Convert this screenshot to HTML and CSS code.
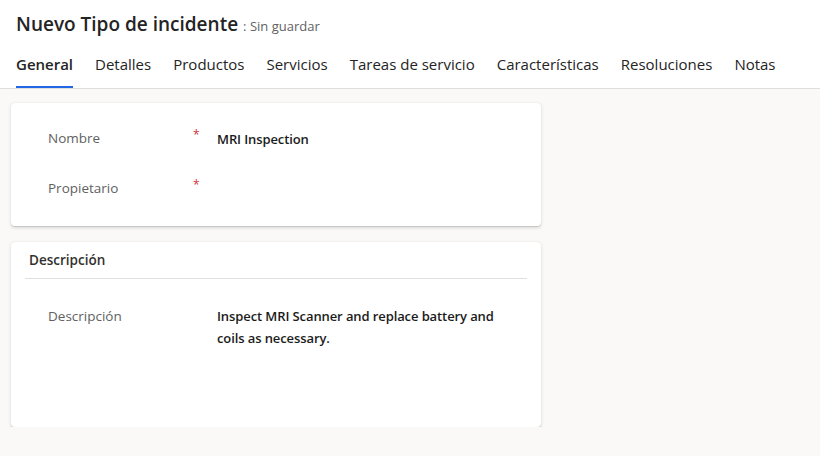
FILE: index.html
```html
<!DOCTYPE html>
<html lang="es">
<head>
    <meta charset="UTF-8">
    <meta name="viewport" content="width=device-width, initial-scale=1.0">
    <title>Nuevo Tipo de incidente</title>
    <link rel="stylesheet" href="styles.css">
</head>
<body>
    <div class="header">
        <div class="title-row">
            <h1 class="title">Nuevo Tipo de incidente</h1>
            <span class="save-state">: Sin guardar</span>
        </div>
        <ul class="tabs">
            <li class="tab active">General</li>
            <li class="tab">Detalles</li>
            <li class="tab">Productos</li>
            <li class="tab">Servicios</li>
            <li class="tab">Tareas de servicio</li>
            <li class="tab">Características</li>
            <li class="tab">Resoluciones</li>
            <li class="tab">Notas</li>
        </ul>
    </div>

    <div class="content">
        <div class="card card-main">
            <div class="field">
                <div class="field-label">Nombre</div>
                <div class="field-req">*</div>
                <div class="field-value strong">MRI Inspection</div>
            </div>
            <div class="field">
                <div class="field-label">Propietario</div>
                <div class="field-req">*</div>
                <div class="field-value"></div>
            </div>
        </div>

        <div class="card card-desc">
            <div class="section-title">Descripción</div>
            <div class="field field-text">
                <div class="field-label">Descripción</div>
                <div class="field-req"></div>
                <div class="field-value desc-value">Inspect MRI Scanner and replace battery and coils as necessary.</div>
            </div>
        </div>
    </div>
</body>
</html>
```

FILE: styles.css
```css
body {
    margin: 0;
    font-family: "Segoe UI", "Open Sans", sans-serif;
    background: #faf9f8;
    color: #242424;
}
.header {
    background: #fff;
    border-bottom: 1px solid #e1dfdd;
    padding: 0 16px;
}
.title-row {
    height: 48px;
    display: flex;
    align-items: center;
    gap: 5px;
}
.title {
    margin: 0;
    font-size: 19px;
    font-weight: 600;
    color: #242424;
}
.save-state {
    font-size: 13px;
    color: #616161;
    padding-top: 3px;
}
.tabs {
    list-style: none;
    margin: 0;
    padding: 0;
    display: flex;
    gap: 22px;
    height: 40px;
}
.tab {
    font-size: 15px;
    color: #242424;
    line-height: 32px;
    border-bottom: 2px solid transparent;
    height: 40px;
    box-sizing: border-box;
}
.tab.active {
    font-weight: 600;
    border-bottom-color: #2266e3;
}
.content {
    padding: 14px 0 0 11px;
    display: flex;
    flex-direction: column;
    gap: 16px;
}
.card {
    width: 530px;
    background: #fff;
    border-radius: 4px;
    box-shadow: 0 1.6px 3.6px rgba(0, 0, 0, 0.13), 0 0.3px 0.9px rgba(0, 0, 0, 0.11);
    box-sizing: border-box;
}
.card-main {
    height: 123px;
    padding-top: 10px;
}
.card-desc {
    height: 185px;
    padding: 0 14px;
}
.field {
    display: flex;
    align-items: center;
    height: 50px;
    padding-left: 37px;
    font-size: 13.5px;
}
.field-label {
    width: 145px;
    color: #616161;
}
.field-req {
    width: 24px;
    font-size: 12px;
    color: #d13438;
    margin-top: -7px;
}
.field-value {
    font-size: 13px;
    font-weight: 600;
    letter-spacing: -0.1px;
    color: #1b1b1b;
}
.field-value.strong {
    margin-top: 2px;
}
.section-title {
    font-size: 13.5px;
    font-weight: 600;
    color: #323130;
    height: 36px;
    line-height: 36px;
    padding-left: 4px;
    border-bottom: 1px solid #e1dfdd;
}
.field-text {
    align-items: flex-start;
    height: auto;
    padding-left: 23px;
    padding-top: 26px;
    line-height: 22px;
}
.desc-value {
    width: 300px;
}
```
